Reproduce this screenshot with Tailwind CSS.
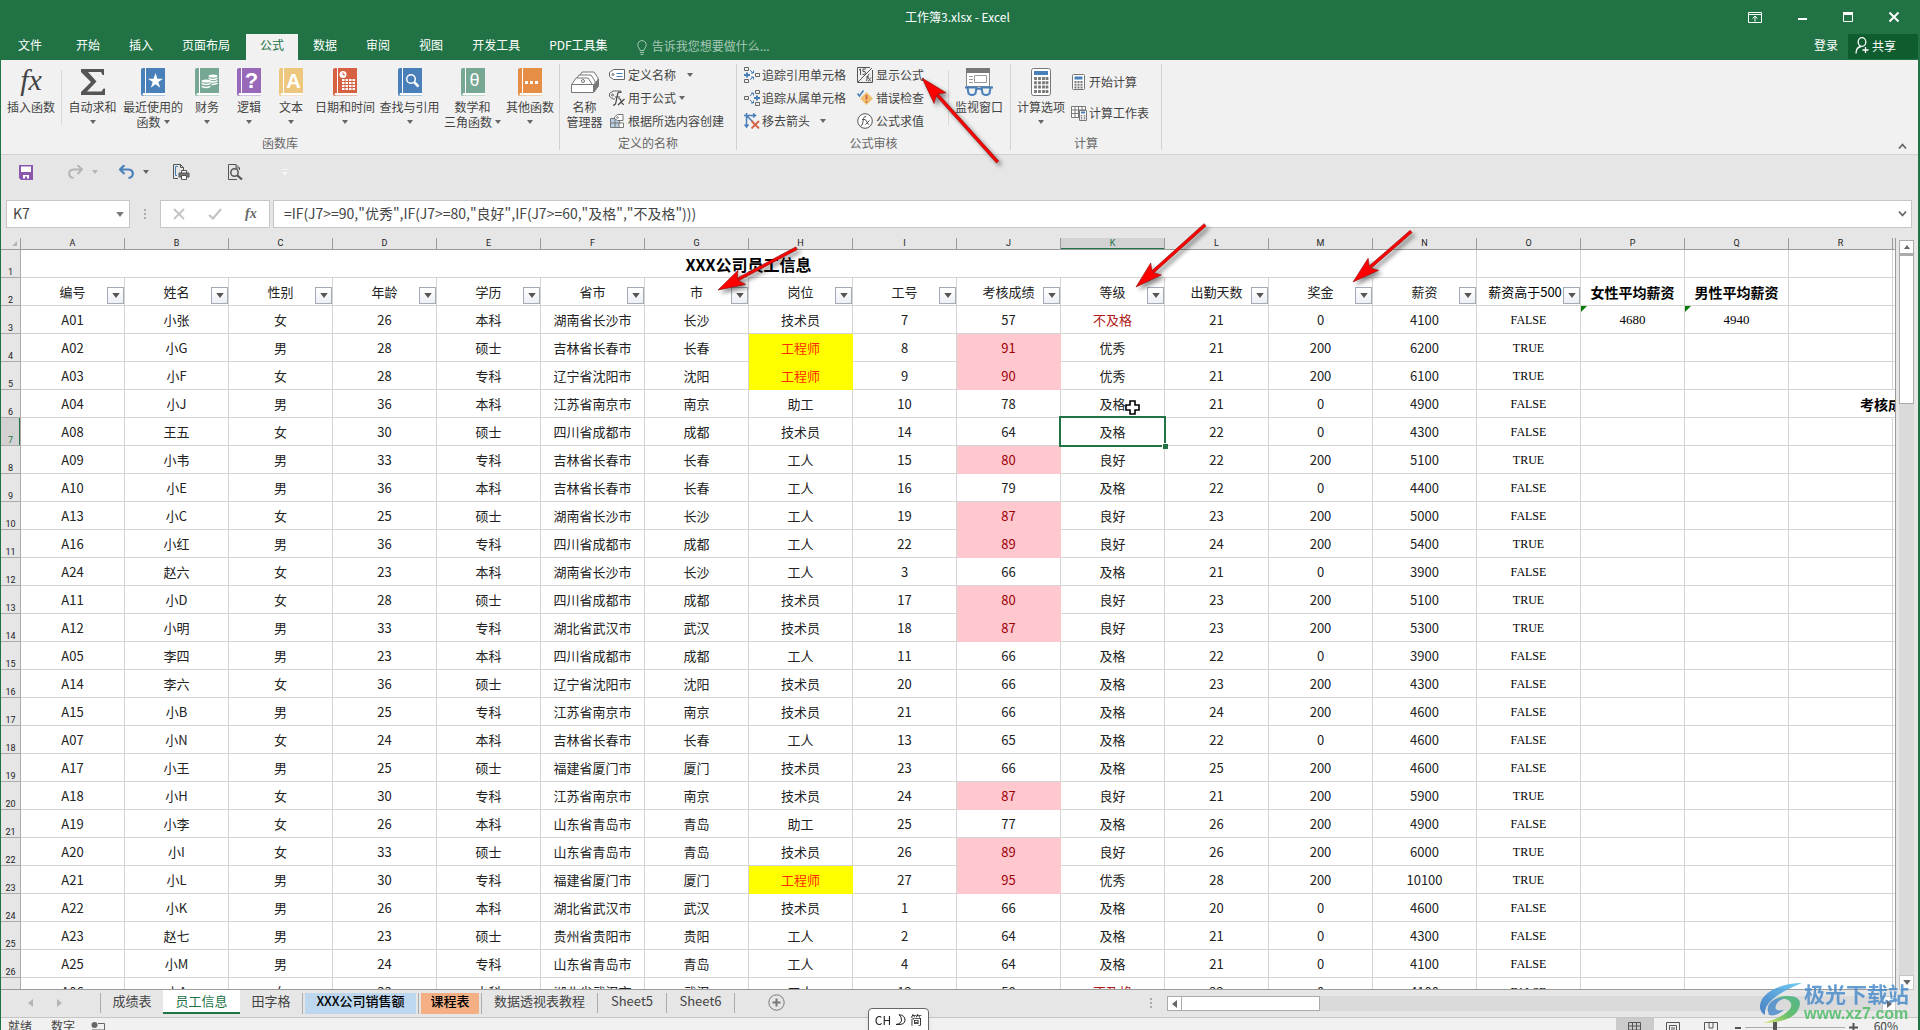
<!DOCTYPE html>
<html lang="zh-CN">
<head>
<meta charset="utf-8">
<title>工作簿3.xlsx - Excel</title>
<script src="https://cdn.jsdelivr.net/npm/@tailwindcss/browser@4"></script>
</head>
<body class="font-['Noto_Sans_CJK_SC','Noto_Sans',sans-serif] text-[12px] text-[#444]">
<svg class="hidden" aria-hidden="true">
  <symbol id="caret" viewBox="0 0 6 4"><path d="M0 0h6L3 4z" fill="currentColor"/></symbol>
  <symbol id="book" viewBox="0 0 24 28"><path d="M2 0h22v25H3q-1.500 0-1.500 1.200T3 27.400h21v.6H2q-2-.2-2-2V2q0-2 2-2z" fill="currentColor"/><path d="M3 25.200h21v2H3q-1.300-.2-1.300-1T3 25.200z" fill="#fff"/><path d="M4.500 0v25" stroke="#fff" stroke-width="1"/></symbol>
</svg>
<div class="flex h-screen flex-col overflow-hidden border-l border-r-2 border-l-[#217346] border-r-[#217346] bg-[#e6e6e6]">

  <header class="shrink-0 bg-[#217346] text-white">
    <div class="relative flex h-[34px] items-center justify-end">
      <h1 class="absolute inset-x-0 pr-[4px] text-center text-[12px] leading-[34px]">工作簿3.xlsx - Excel</h1>
      <div class="relative flex items-center gap-[34px] pr-[18px]">
        <button aria-label="功能区显示选项"><svg class="h-[12px] w-[14px]" viewBox="0 0 14 12" fill="none" stroke="#fff"><path d="M.5 1.500h13v10H.5zM.5 3.500h13M7 10.500v-5M4.500 7.500 7 5l2.500 2.500"/></svg></button>
        <button aria-label="最小化"><svg class="h-[12px] w-[12px]" viewBox="0 0 12 12"><path d="M2 7h9v2H2z" fill="#fff"/></svg></button>
        <button aria-label="最大化"><svg class="h-[12px] w-[12px]" viewBox="0 0 12 12"><path d="M1.500 1.500h9v9h-9z" fill="none" stroke="#fff"/><path d="M1 1h10v3H1z" fill="#fff"/></svg></button>
        <button aria-label="关闭"><svg class="h-[12px] w-[12px]" viewBox="0 0 12 12"><path d="m1.500 1.500 9 9m0-9-9 9" stroke="#fff" stroke-width="2"/></svg></button>
      </div>
    </div>
    <nav class="flex h-[26px] items-stretch leading-[22px]">
      <a href="#" class="pl-[17px] pr-[20px]">文件</a>
      <a href="#" class="pl-[14px] pr-[15px]">开始</a>
      <a href="#" class="pl-[14px] pr-[15px]">插入</a>
      <a href="#" class="pl-[14px] pr-[15px]">页面布局</a>
      <a href="#" aria-current="page" class="ml-px bg-[#f1f1f1] px-[14px] text-[#217346]">公式</a>
      <a href="#" class="px-[15px]">数据</a>
      <a href="#" class="pl-[14px] pr-[15px]">审阅</a>
      <a href="#" class="pl-[14px] pr-[15px]">视图</a>
      <a href="#" class="pl-[14px] pr-[15px]">开发工具</a>
      <a href="#" class="pl-[14px] pr-[15px]">PDF工具集</a>
      <label class="flex items-center gap-[5px] pl-[14px] text-[#a6c7b5]">
        <svg class="h-[15px] w-[10px]" viewBox="0 0 10 15" fill="none" stroke="currentColor"><path d="M3 10.500C3 8.500.8 7.500.8 4.800a4.200 4.200 0 0 1 8.400 0C9.200 7.500 7 8.500 7 10.500zM3 12.500h4M3.500 14.500h3"/></svg>
        <input class="w-[160px] pb-[2px] placeholder-[#a6c7b5] outline-none" placeholder="告诉我您想要做什么..." aria-label="告诉我您想要做什么">
      </label>
      <a href="#" class="ml-auto pr-[10px]">登录</a>
      <button class="mb-px flex w-[70px] items-center gap-[3px] bg-[#0f5c2f] pb-[2px] pl-[7px]">
        <svg class="h-[17px] w-[14px]" viewBox="0 0 14 17" fill="none" stroke="#fff" stroke-width="1.300"><ellipse cx="7" cy="5" rx="3.800" ry="4.300"/><path d="M1 16.500c0-4 2-6.500 5-7M10.500 10v6M7.500 13h6"/></svg>共享</button>
    </nav>
  </header>

  <section aria-label="公式功能区" class="relative flex h-[95px] shrink-0 border-b border-[#d2d2d2] bg-[#f1f1f1] leading-[15px]">
    <div class="my-[4px] flex flex-col border-r border-[#d2d2d2]">
      <div class="flex h-[72px] pt-[4px]">
        <button class="flex w-[60px] flex-col items-center gap-[3px]"><span class="h-[28px] font-['Liberation_Serif',serif] text-[30px] italic leading-[24px] text-[#444]">fx</span><span>插入函数</span></button>
        <div class="mt-[2px] h-[55px] w-px bg-[#d9d9d9]"></div>
        <button class="flex w-[61px] flex-col items-center"><svg class="mb-[3px] h-[28px] w-[24px]" viewBox="0 0 24 28"><path d="M0 1h23v6h-1.500L20 4H7l8.500 9.500L6 23.500h14.500l2-3H24V27H0v-3l10-10L0 4z" fill="#555"/></svg><span>自动求和</span><svg class="mt-[6px] h-[4px] w-[6px] text-[#666]"><use href="#caret"/></svg></button>
        <button class="flex w-[60px] flex-col items-center"><span class="relative mb-[3px] h-[28px] w-[24px] text-[#4a80b9]"><svg class="h-[28px] w-[24px]"><use href="#book"/></svg><svg class="absolute left-[7px] top-[5px] h-[15px] w-[15px]" viewBox="0 0 16 16"><path d="m8 0 2 6h6l-5 3.700 2 6L8 12l-5 3.700 2-6L0 6h6z" fill="#fff"/></svg></span><span>最近使用的</span><span class="flex items-center gap-[3px]">函数<svg class="h-[4px] w-[6px] text-[#666]"><use href="#caret"/></svg></span></button>
        <button class="flex w-[48px] flex-col items-center"><span class="relative mb-[3px] h-[28px] w-[24px] text-[#77a894]"><svg class="h-[28px] w-[24px]"><use href="#book"/></svg><svg class="absolute left-[6px] top-[6px] h-[15px] w-[17px]" viewBox="0 0 17 15" fill="#fff"><ellipse cx="12" cy="2" rx="4.500" ry="1.600"/><path d="M7.500 3.500q4.500 2.500 9 0v1.500q-4.500 2.500-9 0zM9 6.500q4 1.500 7.500-.5v1.500q-3.500 2-7.500 1zM10.500 9.500q3 .5 6-1v1.500q-3 1.500-6 1z"/><ellipse cx="5" cy="7" rx="4.500" ry="1.600"/><path d="M.5 8.500q4.500 2.500 9 0v1.500q-4.500 2.500-9 0zM.5 11.500q4.500 2.500 9 0V13q-4.500 2.500-9 0z"/></svg></span><span>财务</span><svg class="mt-[6px] h-[4px] w-[6px] text-[#666]"><use href="#caret"/></svg></button>
        <button class="flex w-[36px] flex-col items-center"><span class="relative mb-[3px] h-[28px] w-[24px] text-[#9868b9]"><svg class="h-[28px] w-[24px]"><use href="#book"/></svg><span class="absolute inset-x-0 top-0 pl-[5px] text-center font-['Liberation_Sans',sans-serif] text-[22px] font-bold leading-[26px] text-white">?</span></span><span>逻辑</span><svg class="mt-[6px] h-[4px] w-[6px] text-[#666]"><use href="#caret"/></svg></button>
        <button class="flex w-[48px] flex-col items-center"><span class="relative mb-[3px] h-[28px] w-[24px] text-[#eec77e]"><svg class="h-[28px] w-[24px]"><use href="#book"/></svg><span class="absolute inset-x-0 top-0 pl-[5px] text-center font-['Liberation_Sans',sans-serif] text-[20px] font-bold leading-[26px] text-white">A</span></span><span>文本</span><svg class="mt-[6px] h-[4px] w-[6px] text-[#666]"><use href="#caret"/></svg></button>
        <button class="flex w-[60px] flex-col items-center"><span class="relative mb-[3px] h-[28px] w-[24px] text-[#d66042]"><svg class="h-[28px] w-[24px]"><use href="#book"/></svg><svg class="absolute left-[6px] top-[2px] h-[20px] w-[17px]" viewBox="0 0 17 20"><path d="M3 9h13v11H3z" fill="#fff"/><path d="M3 11.500h13M3 14.500h13M3 17.500h13M6 9v11M9.500 9v11M13 9v11" stroke="#d66042"/><circle cx="4" cy="4.500" r="3.500" fill="#fff"/><path d="M4 2.500v2.200h2" fill="none" stroke="#d66042"/></svg></span><span>日期和时间</span><svg class="mt-[6px] h-[4px] w-[6px] text-[#666]"><use href="#caret"/></svg></button>
        <button class="flex w-[69px] flex-col items-center"><span class="relative mb-[3px] h-[28px] w-[24px] text-[#4a80b9]"><svg class="h-[28px] w-[24px]"><use href="#book"/></svg><svg class="absolute left-[7px] top-[5px] h-[15px] w-[15px]" viewBox="0 0 15 15" fill="none" stroke="#fff"><circle cx="6" cy="6" r="4.300" stroke-width="1.500"/><path d="m9 9 4.500 4.500" stroke-width="2.500"/></svg></span><span>查找与引用</span><svg class="mt-[6px] h-[4px] w-[6px] text-[#666]"><use href="#caret"/></svg></button>
        <button class="flex w-[57px] flex-col items-center"><span class="relative mb-[3px] h-[28px] w-[24px] text-[#77a894]"><svg class="h-[28px] w-[24px]"><use href="#book"/></svg><span class="absolute inset-x-0 top-0 pl-[4px] text-center font-['Liberation_Sans',sans-serif] text-[18px] leading-[25px] text-white">θ</span></span><span>数学和</span><span class="flex items-center gap-[3px]">三角函数<svg class="h-[4px] w-[6px] text-[#666]"><use href="#caret"/></svg></span></button>
        <button class="flex w-[58px] flex-col items-center"><span class="relative mb-[3px] h-[28px] w-[24px] text-[#e68e46]"><svg class="h-[28px] w-[24px]"><use href="#book"/></svg><svg class="absolute left-[7px] top-[13px] h-[3px] w-[14px]" viewBox="0 0 14 3" fill="#fff"><path d="M0 0h3v3H0zM5 0h3v3H5zM10 0h3v3h-3z"/></svg></span><span>其他函数</span><svg class="mt-[6px] h-[4px] w-[6px] text-[#666]"><use href="#caret"/></svg></button>
      </div>
      <h2 class="text-center leading-[14px] text-[#666]">函数库</h2>
    </div>

    <div class="my-[4px] flex w-[177px] flex-col border-r border-[#d2d2d2]">
      <div class="flex h-[72px]">
        <button class="flex w-[49px] flex-col items-center pt-[4px]"><svg class="mb-[3px] h-[28px] w-[30px]" viewBox="0 0 30 28" fill="#fff" stroke="#777"><path d="M8 10 12 4h12l4 6v8H8z"/><path d="M5 13 9 7h12l4 6v6H5z"/><path d="M2 16 6 10h12l4 6v3H2z"/><circle cx="13" cy="13" r="1.500"/><path d="m24 17 4.500-6v7L24 24z" fill="#777"/><path d="M1.500 16.500H23.500v8H1.500z"/></svg><span>名称</span><span>管理器</span></button>
        <div class="flex flex-col">
          <button class="flex h-[23px] items-center gap-[3px] pb-[2px]"><svg class="h-[16px] w-[16px]" viewBox="0 0 16 16" fill="#fff" stroke="#666"><path d="M4.500 2.500h11v10h-11l-4-3v-4z"/><circle cx="4" cy="7.500" r="1"/><path d="M7.500 6.500h6M7.500 9.500h6" stroke="#4a80b9"/></svg>定义名称<svg class="ml-[8px] h-[4px] w-[6px] text-[#666]"><use href="#caret"/></svg></button>
          <button class="flex h-[23px] items-center gap-[3px] pb-[2px]"><svg class="h-[16px] w-[16px]" viewBox="0 0 16 16" fill="none" stroke="#666"><path d="M6 9H4L.5 6.500v-3L4 1h8v2"/><circle cx="3.500" cy="5" r="1"/><path d="M12 2.500q-3-1.500-3.500 2L7 12q-.5 3.500-3 3M6 7h5M9.500 9q2-1 2.500 2t3 3.500M15.500 9 9 15" stroke="#444" stroke-width="1.200"/></svg>用于公式<svg class="h-[4px] w-[6px] text-[#666]"><use href="#caret"/></svg></button>
          <button class="flex h-[23px] items-center gap-[3px] pb-[2px]"><svg class="h-[16px] w-[16px]" viewBox="0 0 16 16" fill="#fff" stroke="#777"><path d="M1.500 5.500h9v9h-9z" fill="#b8cfe6"/><path d="M6 5.500v9M1.500 10h9"/><path d="M10 10h4.500V14.500H10z"/><path d="m5.500 4 3-2.500h5.500v6H8.500l-3-2z"/><circle cx="8.500" cy="4.500" r=".8"/></svg>根据所选内容创建</button>
        </div>
      </div>
      <h2 class="text-center leading-[14px] text-[#666]">定义的名称</h2>
    </div>

    <div class="my-[4px] flex w-[274px] flex-col border-r border-[#d2d2d2]">
      <div class="flex h-[72px] pl-[7px]">
        <div class="flex w-[113px] flex-col">
          <button class="flex h-[23px] items-center gap-[2px] pb-[2px]"><svg class="h-[16px] w-[16px]" viewBox="0 0 16 16" fill="none"><path d="M.5.5h4v3h-4zM.5 12.500h4v3h-4zM11.500 6.500h4v3h-4z" stroke="#666"/><path d="M0 8h6M3 5.500v5" stroke="#4a80b9" stroke-width="2"/><path d="m6 3 3 3M6 13l3-3M7 6h2.500V3.500M7 10h2.500v2.500" stroke="#4a80b9"/></svg>追踪引用单元格</button>
          <button class="flex h-[23px] items-center gap-[2px] pb-[2px]"><svg class="h-[16px] w-[16px]" viewBox="0 0 16 16" fill="none"><path d="M11.500.5h4v3h-4zM11.500 12.500h4v3h-4zM.5 6.500h4v3h-4z" stroke="#666"/><path d="M10 8h6M13 5.500v5" stroke="#4a80b9" stroke-width="2"/><path d="m6 6 3-3M6 10l3 3M7 3h2.500v2.500M7 13h2.500v-2.500" stroke="#4a80b9"/></svg>追踪从属单元格</button>
          <button class="flex h-[23px] items-center gap-[2px] pb-[2px]"><svg class="h-[16px] w-[16px]" viewBox="0 0 16 16" fill="none"><path d="M2.500 14V2.500H11M3 3l6 6M0 2.500h5M2.500 0v5M9 .5l2.500 2L9 4.500M.5 11.500l2 2.500 2-2.500" stroke="#4a80b9" stroke-width="1.500"/><path d="m7.500 8 7.500 7.500M15 8l-7.500 7.500" stroke="#d66042" stroke-width="1.800"/></svg>移去箭头<svg class="ml-[8px] h-[4px] w-[6px] text-[#666]"><use href="#caret"/></svg></button>
        </div>
        <div class="flex w-[91px] flex-col">
          <button class="flex h-[23px] items-center gap-[3px] pb-[2px]"><svg class="h-[16px] w-[16px]" viewBox="0 0 16 16" fill="none" stroke="#555"><path d="M15.500 3v12.500H.5V.5H13M15 1 1 15"/><path d="M2 3l1.500-1v6M9 2H6v2.500q3-.5 2.500 1.500T5.500 7.500M12.500 7q-1.500 0-2 3l-1 4M9 10h3M11 10.500l3 4M14 10.500l-3 4"/></svg>显示公式</button>
          <button class="flex h-[23px] items-center gap-[3px] pb-[2px]"><svg class="h-[16px] w-[16px]" viewBox="0 0 16 16"><path d="m9.500 2 6.500 6.500L9.500 15 3 8.500z" fill="#eec070"/><path d="M9.500 5v4.500M9.500 11v1.500" stroke="#d66042" stroke-width="1.800"/><path d="m.5 3.500 2 2.500L6.500.5" stroke="#4a80b9" stroke-width="1.600" fill="none"/></svg>错误检查</button>
          <button class="flex h-[23px] items-center gap-[3px] pb-[2px]"><svg class="h-[16px] w-[16px]" viewBox="0 0 16 16" fill="none" stroke="#555"><circle cx="8" cy="8" r="7.300" fill="#fff"/><path d="M9 3.500q-2-.5-2.500 2L5.500 11q-.3 1.500-1.500 1.500M5 6.500h3.500M8.500 7.500q1-.5 1.500 1.500t2 2.500M12.500 7.500l-4 4"/></svg>公式求值</button>
        </div>
        <div class="mt-[6px] h-[55px] w-px bg-[#d9d9d9]"></div>
        <button class="flex w-[60px] flex-col items-center pt-[4px]"><svg class="mb-[3px] h-[28px] w-[28px]" viewBox="0 0 28 28" fill="none"><path d="M1.500.5h23v18h-23z" fill="#fff" stroke="#888"/><path d="M1 0h24v5H1z" fill="#777"/><path d="M4 8.500h4M4 11.500h4M4 14.500h4M9.500 7.500h12v7h-12z" stroke="#999"/><path d="M0 19.500h4M24 19.500h4" stroke="#4a80b9" stroke-width="2"/><path d="M2.500 19.500h9l-1 6q-3.500 3-7 0zM16.500 19.500h9l-1 6q-3.500 3-7 0zM11.500 21.500q2.500-2 5 0" stroke="#4a80b9" stroke-width="2" fill="#f1f1f1"/></svg><span>监视窗口</span></button>
      </div>
      <h2 class="text-center leading-[14px] text-[#666]">公式审核</h2>
    </div>

    <div class="my-[4px] flex w-[151px] flex-col border-r border-[#d2d2d2]">
      <div class="flex h-[72px]">
        <button class="flex w-[60px] flex-col items-center pt-[4px]"><svg class="mb-[3px] h-[28px] w-[20px]" viewBox="0 0 20 28"><rect x=".5" y=".5" width="19" height="27" rx="2" fill="#fff" stroke="#777"/><path d="M3 3h14v4H3z" fill="#4a80b9"/><path d="M4.500 9v16M8.500 9v16M12.500 9v16M16 9v16" stroke="#777" stroke-width="2.800" stroke-dasharray="3 1.300"/></svg><span>计算选项</span><svg class="mt-[6px] h-[4px] w-[6px] text-[#666]"><use href="#caret"/></svg></button>
        <div class="flex flex-col pt-[2px]">
          <button class="flex h-[31px] items-center gap-[4px] pl-px"><svg class="h-[16px] w-[13px]" viewBox="0 0 13 16"><rect x=".5" y=".5" width="12" height="15" rx="1" fill="#fff" stroke="#777"/><path d="M2.500 2.500h8v3h-8z" fill="#4a80b9"/><path d="M3.500 7v7.500M6.500 7v7.500M9.500 7v7.500" stroke="#777" stroke-width="2" stroke-dasharray="2 .7"/></svg>开始计算</button>
          <button class="flex h-[31px] items-center gap-[2px]"><svg class="h-[16px] w-[16px]" viewBox="0 0 16 16" fill="#fff" stroke="#777"><path d="M.5 1.500h14v11H.5zM.5 5h14M.5 8.500h14M4 1.500v11M7.500 1.500v11M11 1.500v11"/><path d="M8.500 5.500h7v10h-7z"/><path d="M10 7.500h4" stroke="#4a80b9" stroke-width="2"/><path d="M10.500 10v5M13.500 10v5" stroke-width="1.500" stroke-dasharray="1.500 .7"/></svg>计算工作表</button>
        </div>
      </div>
      <h2 class="text-center leading-[14px] text-[#666]">计算</h2>
    </div>
    <button aria-label="折叠功能区" class="absolute bottom-[4px] right-[11px]"><svg class="h-[8px] w-[9px]" viewBox="0 0 9 8"><path d="m1 6.500 3.500-4 3.500 4" fill="none" stroke="#666" stroke-width="1.800"/></svg></button>
  </section>

  <div class="flex h-[45px] shrink-0 items-center pb-[11px] pl-[18px]">
    <button aria-label="保存"><svg class="h-[15px] w-[14px]" viewBox="0 0 14 15"><path d="M0 0h14v15H2l-2-2z" fill="#8b57ad"/><path d="M2 1.500h10v5.500H2zM4 10h6v3.500H8v-2H6v2H4z" fill="#fff"/></svg></button>
    <button aria-label="恢复" class="ml-[35px] flex items-center gap-[9px] text-[#b5b5b5]"><svg class="h-[14px] w-[15px]" viewBox="0 0 15 14" fill="none" stroke="currentColor" stroke-width="2"><path d="M13 4.500H5.500Q1 5 1.200 9q.3 3.500 4.300 4M9.500 0 14 4.500 9.500 9"/></svg><svg class="h-[4px] w-[6px]"><use href="#caret"/></svg></button>
    <button aria-label="撤消" class="ml-[21px] flex items-center gap-[9px]"><svg class="h-[14px] w-[15px]" viewBox="0 0 15 14" fill="none" stroke="#4a80b9" stroke-width="2.200"><path d="M2 4.500h7.500q4.500.5 4.300 4.500-.3 3.500-4.300 4M5.500 0 1 4.500 5.500 9"/></svg><svg class="h-[4px] w-[6px] text-[#666]"><use href="#caret"/></svg></button>
    <button aria-label="快速打印" class="ml-[24px]"><svg class="h-[16px] w-[17px]" viewBox="0 0 17 16" fill="none" stroke="#555"><path d="M5 14.500H.5V.5h7l3 3V6M7.500.5v3h3" /><path d="M5 2.500H2.500v9H4" stroke="#4a80b9"/><path d="M8.500 6.500h5v3h-5z" fill="#fff"/><path d="M6 9h10v4H6z" fill="#777"/><path d="M8.500 11.500h5v4h-5z" fill="#fff"/></svg></button>
    <button aria-label="打印预览" class="ml-[38px]"><svg class="h-[16px] w-[15px]" viewBox="0 0 15 16" fill="none" stroke="#555"><path d="M9 15.500H.5V.5H8l3.500 3.500V6M8 .5V4h3.500"/><circle cx="6.500" cy="8.500" r="3.700" stroke-width="1.500"/><path d="m9.500 11.500 4.500 4" stroke-width="2.200"/></svg></button>
    <button aria-label="自定义快速访问工具栏" class="ml-[39px] text-[#f5f5f5]"><svg class="h-[7px] w-[6px]" viewBox="0 0 6 7" fill="currentColor"><path d="M0 0h6v1H0zM0 3h6L3 7z"/></svg></button>
  </div>

  <div class="flex h-[38px] shrink-0 items-start pl-[5px] pr-[6px]">
    <div class="flex h-[28px] w-[124px] items-center border border-[#c6c6c6] bg-white pr-[5px]">
      <input aria-label="名称框" value="K7" class="w-full min-w-0 flex-1 pb-px pl-[6px] text-[14px] outline-none">
      <svg class="h-[5px] w-[8px] text-[#777]"><use href="#caret"/></svg>
    </div>
    <svg class="mx-[14px] mt-[9px] h-[11px] w-[2px]" viewBox="0 0 2 11" fill="#aaa"><path d="M0 0h2v2H0zM0 4h2v2H0zM0 8h2v2H0z"/></svg>
    <div class="flex h-[28px] w-[110px] items-center border border-[#c6c6c6] bg-white pl-[12px]">
      <button aria-label="取消"><svg class="h-[12px] w-[12px]" viewBox="0 0 12 12"><path d="m1 1 10 10M11 1 1 11" stroke="#c3c3c3" stroke-width="1.800"/></svg></button>
      <button aria-label="输入" class="ml-[23px]"><svg class="h-[12px] w-[14px]" viewBox="0 0 14 12"><path d="m1 7 4 3.500L13 1" fill="none" stroke="#c3c3c3" stroke-width="2.200"/></svg></button>
      <button aria-label="插入函数" class="ml-[23px] pb-px font-['Liberation_Serif',serif] text-[14px] font-bold italic leading-[20px] text-[#666]">fx</button>
    </div>
    <div class="ml-[3px] flex h-[28px] flex-1 items-center border border-[#c6c6c6] bg-white pr-[4px]">
      <input aria-label="编辑栏" class="min-w-0 flex-1 pb-px pl-[10px] text-[14px] outline-none" value="=IF(J7&gt;=90,&quot;优秀&quot;,IF(J7&gt;=80,&quot;良好&quot;,IF(J7&gt;=60,&quot;及格&quot;,&quot;不及格&quot;)))">
      <button aria-label="展开编辑栏"><svg class="h-[8px] w-[9px]" viewBox="0 0 9 8"><path d="m1 1.500 3.500 4 3.500-4" fill="none" stroke="#666" stroke-width="1.800"/></svg></button>
    </div>
  </div>

  <main class="flex min-h-0 flex-1">
    <div class="min-w-0 flex-1 overflow-hidden border-b border-r border-[#9b9b9b]">
      <table class="w-[1996px] table-fixed border-separate border-spacing-0 bg-white text-center text-[13px] text-[#222]">
        <colgroup id="cols"></colgroup>
        <thead id="letters" class="bg-[#e6e6e6] font-['Roboto',sans-serif] text-[9px] leading-[11px]"></thead>
        <tbody id="rows"></tbody>
      </table>
    </div>
    <div class="flex w-[22px] flex-col pl-[3px] pt-[2px]">
      <div class="flex w-[15px] flex-1 flex-col bg-[#dadada]">
        <button aria-label="向上滚动" class="flex h-[14px] items-center justify-center border border-[#ababab] bg-white"><svg class="h-[4px] w-[8px] rotate-180 text-[#666]"><use href="#caret"/></svg></button>
        <div class="h-[150px] border border-t-2 border-[#ababab] bg-white"></div>
        <button aria-label="向下滚动" class="mt-auto flex h-[15px] items-center justify-center border border-[#c6c6c6] bg-white"><svg class="h-[5px] w-[8px] text-[#666]"><use href="#caret"/></svg></button>
      </div>
    </div>
  </main>

  <footer class="shrink-0">
    <div class="flex h-[27px] items-start text-[13px] leading-[22px]">
      <div class="flex h-[24px] w-[99px] items-center gap-[24px] pl-[27px] pt-[2px] text-[#b5b5b5]">
        <button aria-label="上一张"><svg class="h-[8px] w-[5px]" viewBox="0 0 5 8"><path d="M5 0v8L0 4z" fill="currentColor"/></svg></button>
        <button aria-label="下一张"><svg class="h-[8px] w-[5px]" viewBox="0 0 5 8"><path d="M0 0v8l5-4z" fill="currentColor"/></svg></button>
      </div>
      <div class="mt-[3px] h-[20px] w-px bg-[#ababab]"></div>
      <button class="w-[62px]">成绩表</button>
      <button class="h-[24px] w-[77px] border-b-2 border-[#217346] bg-white text-[#217346]">员工信息</button>
      <button class="w-[62px]">田字格</button>
      <div class="mt-[3px] flex h-[21px] items-stretch border-x border-[#ababab] px-[2px]"><button class="w-[111px] bg-[#bdd7ee] pb-[5px] font-medium leading-[16px] text-black">XXX公司销售额</button></div>
      <div class="mt-[3px] flex h-[21px] items-stretch border-r border-[#ababab] px-[2px]"><button class="w-[58px] bg-[#f4b084] pb-[5px] font-medium leading-[16px] text-black">课程表</button></div>
      <button class="w-[115px]">数据透视表教程</button>
      <div class="mt-[3px] h-[20px] w-px bg-[#ababab]"></div>
      <button class="w-[68px]">Sheet5</button>
      <div class="mt-[3px] h-[20px] w-px bg-[#ababab]"></div>
      <button class="w-[67px]">Sheet6</button>
      <div class="mt-[3px] h-[20px] w-px bg-[#ababab]"></div>
      <button aria-label="新工作表" class="ml-[33px] mt-[4px]"><svg class="h-[17px] w-[17px]" viewBox="0 0 17 17" fill="none" stroke="#777"><circle cx="8.500" cy="8.500" r="7.700"/><path d="M8.500 4.500v8M4.500 8.500h8" stroke-width="2"/></svg></button>
      <svg class="ml-auto mr-[15px] mt-[8px] h-[11px] w-[2px]" viewBox="0 0 2 11" fill="#aaa"><path d="M0 0h2v2H0zM0 4h2v2H0zM0 8h2v2H0z"/></svg>
      <div class="mr-[22px] mt-[6px] flex h-[15px] w-[729px] items-stretch bg-[#dadada]">
        <button aria-label="向左滚动" class="flex w-[15px] items-center justify-center border border-[#ababab] bg-white"><svg class="h-[8px] w-[5px] text-[#666]" viewBox="0 0 5 8"><path d="M5 0v8L0 4z" fill="currentColor"/></svg></button>
        <div class="w-[138px] border border-l-0 border-[#ababab] bg-white"></div>
        <button aria-label="向右滚动" class="ml-auto flex w-[14px] items-center justify-center border border-[#c6c6c6] bg-white"><svg class="h-[8px] w-[5px] text-[#666]" viewBox="0 0 5 8"><path d="M0 0v8l5-4z" fill="currentColor"/></svg></button>
      </div>
    </div>
    <div class="flex h-[13px] items-start overflow-hidden border-t border-[#c6c6c6] bg-[#f1f1f1] leading-[16px]">
      <span class="pl-[7px]">就绪</span><span class="pl-[19px]">数字</span>
      <svg class="ml-[16px] mt-[4px] h-[12px] w-[14px]" viewBox="0 0 14 12"><circle cx="3.500" cy="3" r="3" fill="#666"/><path d="M7 1.500h6.500V12H1V8h12" fill="none" stroke="#666"/><path d="M3 10h8" stroke="#666" stroke-dasharray="2 1"/></svg>
      <div class="ml-auto flex items-start pr-[20px]">
        <button aria-label="普通视图" class="flex h-[18px] w-[38px] justify-center bg-[#cbcbcb] pt-[4px]"><svg class="h-[12px] w-[13px]" viewBox="0 0 13 12" fill="none" stroke="#555"><path d="M.5.5h12v11H.5zM4.500.5v11M8.500.5v11M.5 4h12M.5 8h12"/></svg></button>
        <button aria-label="页面布局" class="flex w-[38px] justify-center pt-[4px]"><svg class="h-[14px] w-[14px]" viewBox="0 0 14 14" fill="none" stroke="#555"><path d="M.5.500h13v13H.5zM3.500 3.500h7v10h-7zM5 6h4M5 8h4M5 10h4"/></svg></button>
        <button aria-label="分页预览" class="flex w-[38px] justify-center pt-[4px]"><svg class="h-[14px] w-[14px]" viewBox="0 0 14 14" fill="none" stroke="#555"><path d="M.5 13V.5h13V9H.5M5 .5V6H9V.5"/></svg></button>
        <button aria-label="缩小" class="ml-[5px] mt-[9px] h-[2px] w-[6px] bg-[#555]"></button>
        <input type="range" aria-label="显示比例" min="10" max="400" value="60" class="relative ml-[4px] mt-[9px] h-px w-[100px] appearance-none bg-[#aaa] [&::-webkit-slider-thumb]:ml-[16px] [&::-webkit-slider-thumb]:h-[12px] [&::-webkit-slider-thumb]:w-[4px] [&::-webkit-slider-thumb]:appearance-none [&::-webkit-slider-thumb]:bg-[#555]">
        <button aria-label="放大" class="ml-[4px] mt-[5px]"><svg class="h-[9px] w-[9px]" viewBox="0 0 9 9"><path d="M4.500 0v9M0 4.500h9" stroke="#555" stroke-width="2"/></svg></button>
        <span class="pl-[16px]">60%</span>
      </div>
    </div>
  </footer>
</div>

<div class="fixed bottom-[-4px] left-[868px] flex h-[26px] w-[61px] items-center justify-center gap-[4px] rounded-[4px] border border-[#666] bg-white pb-[2px] text-[12px] text-[#222] shadow-md">CH<svg class="h-[12px] w-[11px]" viewBox="0 0 11 12"><path d="M4 .7q6 .5 6 5.500T1 10.500q5.500-1 5.500-4.500T4 .7z" fill="none" stroke="#222"/></svg>简</div>

<div class="pointer-events-none fixed bottom-[7px] right-[11px] flex items-center gap-[2px] opacity-85">
  <svg class="h-[40px] w-[42px]" viewBox="0 0 42 40"><defs><linearGradient id="wa" x1="0" y1="1" x2="1" y2="0"><stop offset="0" stop-color="#2f6fc0"/><stop offset="1" stop-color="#5cc4f2"/></linearGradient><linearGradient id="wb" x1="0" y1="1" x2="1" y2="0"><stop offset="0" stop-color="#d8e04a"/><stop offset=".5" stop-color="#4db85a"/><stop offset="1" stop-color="#3fae85"/></linearGradient></defs><path d="M42 0C20 0 0 10 0 24q0 5 5 8Q2 16 42 0z" fill="url(#wa)"/><path d="M9 32Q4 20 18 15q8-2 12 0-11 0-14 7t8 5q-8 7-15 5z" fill="#4a8ccb"/><path d="M26 13q14-1 14 8Q38 39 3 40q16-4 24-11t1-12q-5-3-12-1 4-3 10-3z" fill="url(#wb)"/></svg>
  <div class="flex flex-col gap-[2px]"><span class="text-[21px] font-bold leading-[20px] text-[#4a8ccb]">极光下载站</span><span class="font-['Liberation_Sans',sans-serif] text-[16px] font-bold leading-[18px] text-[#4dbb66]">www.xz7.com</span></div>
</div>

<svg class="pointer-events-none fixed left-0 top-0 h-[420px] w-[1500px] drop-shadow-[3px_3px_2px_rgba(0,0,0,0.45)]" viewBox="0 0 1500 420">
  <defs><path id="arrow" d="M0 0 27-8 23-2V2L27 8z"/></defs>
  <g fill="#f00" stroke="#8a1010" stroke-width=".6">
    <g transform="translate(922 78) rotate(48)"><use href="#arrow"/><path d="M23-1.500h90v3H23z"/></g>
    <g transform="translate(718 290) rotate(-28)"><use href="#arrow"/><path d="M23-1.500h66v3H23z"/></g>
    <g transform="translate(1136 287) rotate(-42)"><use href="#arrow"/><path d="M23-1.500h70v3H23z"/></g>
    <g transform="translate(1353 282) rotate(-41)"><use href="#arrow"/><path d="M23-1.500h54v3H23z"/></g>
  </g>
</svg>
<svg class="pointer-events-none fixed left-[1125px] top-[400px] h-[15px] w-[15px]" viewBox="0 0 15 15"><path d="M5 1h5v4h4v5h-4v4H5v-4H1V5h4z" fill="#fff" stroke="#000" stroke-width="1.600"/></svg>

<script>
const letters = 'ABCDEFGHIJKLMNOPQRS'.split('');
const headings = ['编号','姓名','性别','年龄','学历','省市','市','岗位','工号','考核成绩','等级','出勤天数','奖金','薪资','薪资高于500'];
const people = `A01 小张 女 26 本科 湖南省长沙市 长沙 技术员 7 57 不及格 21 0 4100 FALSE
A02 小G 男 28 硕士 吉林省长春市 长春 工程师 8 91 优秀 21 200 6200 TRUE
A03 小F 女 28 专科 辽宁省沈阳市 沈阳 工程师 9 90 优秀 21 200 6100 TRUE
A04 小J 男 36 本科 江苏省南京市 南京 助工 10 78 及格 21 0 4900 FALSE
A08 王五 女 30 硕士 四川省成都市 成都 技术员 14 64 及格 22 0 4300 FALSE
A09 小韦 男 33 专科 吉林省长春市 长春 工人 15 80 良好 22 200 5100 TRUE
A10 小E 男 36 本科 吉林省长春市 长春 工人 16 79 及格 22 0 4400 FALSE
A13 小C 女 25 硕士 湖南省长沙市 长沙 工人 19 87 良好 23 200 5000 FALSE
A16 小红 男 36 专科 四川省成都市 成都 工人 22 89 良好 24 200 5400 TRUE
A24 赵六 女 23 本科 湖南省长沙市 长沙 工人 3 66 及格 21 0 3900 FALSE
A11 小D 女 28 硕士 四川省成都市 成都 技术员 17 80 良好 23 200 5100 TRUE
A12 小明 男 33 专科 湖北省武汉市 武汉 技术员 18 87 良好 23 200 5300 TRUE
A05 李四 男 23 本科 四川省成都市 成都 工人 11 66 及格 22 0 3900 FALSE
A14 李六 女 36 硕士 辽宁省沈阳市 沈阳 技术员 20 66 及格 23 200 4300 FALSE
A15 小B 男 25 专科 江苏省南京市 南京 技术员 21 66 及格 24 200 4600 FALSE
A07 小N 女 24 本科 吉林省长春市 长春 工人 13 65 及格 22 0 4600 FALSE
A17 小王 男 25 硕士 福建省厦门市 厦门 技术员 23 66 及格 25 200 4600 FALSE
A18 小H 女 30 专科 江苏省南京市 南京 技术员 24 87 良好 21 200 5900 TRUE
A19 小李 女 26 本科 山东省青岛市 青岛 助工 25 77 及格 26 200 4900 FALSE
A20 小I 女 33 硕士 山东省青岛市 青岛 技术员 26 89 良好 26 200 6000 TRUE
A21 小L 男 30 专科 福建省厦门市 厦门 工程师 27 95 优秀 28 200 10100 TRUE
A22 小K 男 26 本科 湖北省武汉市 武汉 技术员 1 66 及格 20 0 4600 FALSE
A23 赵七 男 23 硕士 贵州省贵阳市 贵阳 工人 2 64 及格 21 0 4300 FALSE
A25 小M 男 24 专科 山东省青岛市 青岛 工人 4 64 及格 21 0 4100 FALSE
A06 小A 女 33 本科 湖北省武汉市 武汉 工人 12 58 不及格 22 0 4100 FALSE`.split('\n').map(r => r.split(' '));

const cell = 'relative h-[28px] border-b border-r border-[#d4d4d4] p-0 whitespace-nowrap leading-[20px]';
const rowHead = n => `<th scope="row" class="h-[28px] border-b border-r border-[#ababab] p-0 font-['Roboto',sans-serif] text-[9px] font-normal leading-[9px] align-bottom ${n === 7 ? 'bg-[#d2d2d2] text-[#217346] shadow-[inset_-1px_0_0_#217346]' : 'bg-[#e6e6e6]'}">${n}</th>`;
const blank = n => `<td class="${cell}"></td>`.repeat(n);
const filter = name => `<button aria-label="筛选${name}" class="absolute bottom-px right-0 flex h-[17px] w-[17px] items-center justify-center border border-[#a3abb5] bg-linear-to-b from-white to-[#eceff4]"><svg class="h-[5px] w-[8px] text-[#555]"><use href="#caret"/></svg></button>`;

document.getElementById('cols').innerHTML = '<col class="w-[20px]">' + '<col class="w-[104px]">'.repeat(19);
document.getElementById('letters').innerHTML = '<tr><th class="h-[12px] border-b border-r border-[#9b9b9b] p-0"><svg class="ml-auto mr-[3px] h-[5px] w-[5px]" viewBox="0 0 5 5"><path d="M5 0v5H0z" fill="#b5b5b5"/></svg></th>' +
  letters.map(l => `<th scope="col" class="h-[12px] border-b border-r border-[#9b9b9b] p-0 font-normal ${l === 'K' ? 'bg-[#d2d2d2] text-[#217346] shadow-[inset_0_-1px_0_#217346]' : ''}">${l}</th>`).join('') + '</tr>';

let html = `<tr>${rowHead(1)}<td colspan="14" class="${cell} text-[16px] font-bold text-black">XXX公司员工信息</td>${blank(5)}</tr>`;
html += `<tr>${rowHead(2)}` + headings.map((h, i) => `<td class="${cell} ${i === 14 ? 'pr-[7px] text-black' : ''}">${h}${filter(h)}</td>`).join('') +
  `<td class="${cell} text-[14px] font-bold text-black">女性平均薪资</td><td class="${cell} text-[14px] font-bold text-black">男性平均薪资</td>${blank(2)}</tr>`;
people.forEach((p, r) => {
  const n = r + 3;
  html += `<tr>${rowHead(n)}`;
  p.forEach((v, c) => {
    let look = '';
    if (v === '工程师') look = 'bg-[#ffff00] border-[#ffff00] text-[#ff2a00]';
    else if (c === 9 && +v >= 80) look = 'bg-[#ffc7ce] border-[#ffc7ce] text-[#9c0006]';
    else if (v === '不及格') look = 'text-[#b01818]';
    else if (c === 14) look = "font-['Liberation_Serif',serif] text-[12px] text-black";
    const base = look.includes('border-') ? cell.replace('border-[#d4d4d4]', '') : cell;
    const frame = n === 7 && c === 10 ? '<span class="absolute -inset-[2px] z-10 border-2 border-[#217346]"></span><span class="absolute -bottom-[4px] -right-[4px] z-10 h-[6px] w-[6px] border-l border-t border-white bg-[#217346]"></span>' : '';
    html += `<td class="${base} ${look}">${v}${frame}</td>`;
  });
  if (n === 3) {
    html += ['4680', '4940'].map(v => `<td class="${cell} font-['Liberation_Serif',serif] text-[13px] text-black"><svg class="absolute left-0 top-0 h-[6px] w-[6px]" viewBox="0 0 6 6"><path d="M0 0h6L0 6z" fill="#0a7a0a"/></svg>${v}</td>`).join('') + blank(2);
  } else if (n === 6) {
    html += blank(2) + `<td colspan="2" class="${cell} pl-[71px] text-left text-[14px] font-bold text-black">考核成绩</td>`;
  } else html += blank(4);
  html += '</tr>';
});
document.getElementById('rows').innerHTML = html;
</script>
</body>
</html>
